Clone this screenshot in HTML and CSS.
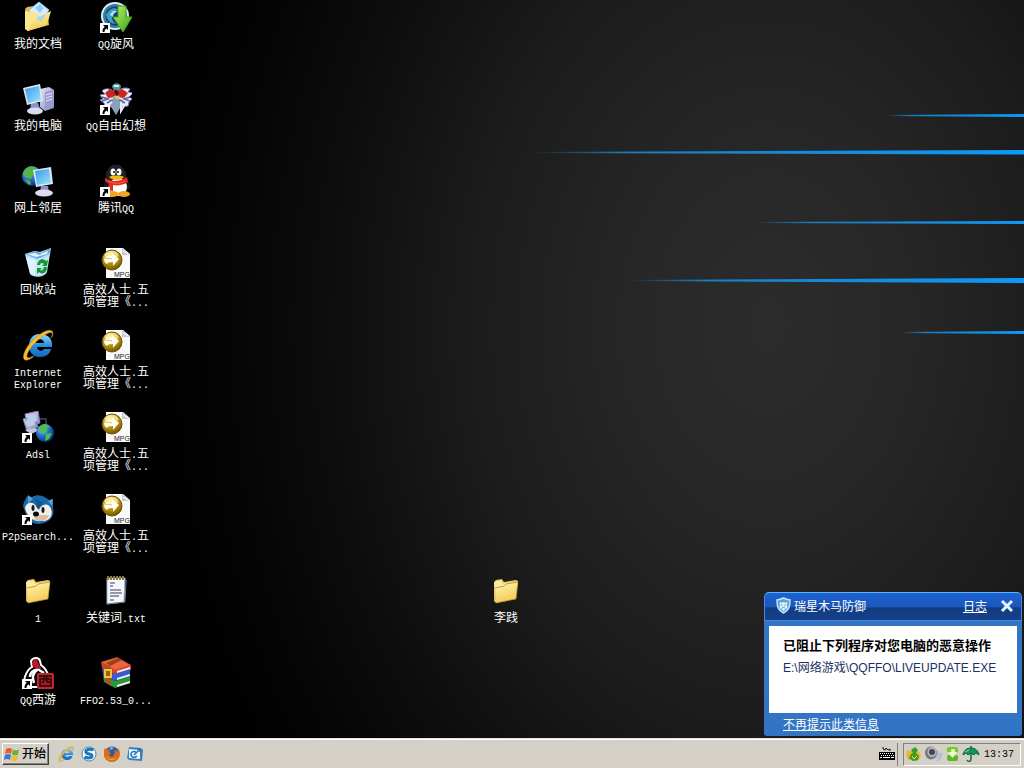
FILE: index.html
```
<!DOCTYPE html>
<html lang="zh-CN">
<head>
  <meta charset="UTF-8">
  <meta name="viewport" content="width=device-width, initial-scale=1.0">
  <title>桌面</title>
  <link rel="stylesheet" href="styles.css">
</head>
<body>
  <!-- Shared icon shapes -->
  <svg class="defs" width="0" height="0" aria-hidden="true">
    <defs>
      <linearGradient id="blade" x1="0" x2="1" y1="0" y2="0">
        <stop offset="0" stop-color="#1496ee" stop-opacity="0"/>
        <stop offset="0.2" stop-color="#168ad8" stop-opacity="0.9"/>
        <stop offset="1" stop-color="#0d99f8"/>
      </linearGradient>
      <linearGradient id="yellow" x1="0" x2="0.4" y1="0" y2="1">
        <stop offset="0" stop-color="#fff6b4"/>
        <stop offset="1" stop-color="#f3cb55"/>
      </linearGradient>
      <linearGradient id="screen" x1="0" x2="1" y1="0" y2="1">
        <stop offset="0" stop-color="#3a98e6"/>
        <stop offset="1" stop-color="#9ae6ff"/>
      </linearGradient>
      <linearGradient id="metal" x1="0" x2="1" y1="0" y2="1">
        <stop offset="0" stop-color="#e6e6fa"/>
        <stop offset="1" stop-color="#8183b8"/>
      </linearGradient>
      <radialGradient id="globe" cx="0.35" cy="0.3" r="0.75">
        <stop offset="0" stop-color="#8fd0ff"/>
        <stop offset="0.5" stop-color="#2470c8"/>
        <stop offset="1" stop-color="#0b2d78"/>
      </radialGradient>
      <radialGradient id="gold" cx="0.4" cy="0.25" r="0.8">
        <stop offset="0" stop-color="#fff3a0"/>
        <stop offset="0.45" stop-color="#c8a416"/>
        <stop offset="1" stop-color="#6b4c00"/>
      </radialGradient>
      <linearGradient id="green" x1="0" x2="1" y1="0" y2="1">
        <stop offset="0" stop-color="#c2f06a"/>
        <stop offset="1" stop-color="#35a312"/>
      </linearGradient>
      <linearGradient id="ieblue" x1="0" x2="0" y1="0" y2="1">
        <stop offset="0" stop-color="#8fdcff"/>
        <stop offset="0.5" stop-color="#2c8ddd"/>
        <stop offset="1" stop-color="#1767bb"/>
      </linearGradient>
      <symbol id="arrow" viewBox="0 0 32 32">
        <path d="M0 22h10v10H0z" fill="#fff"/>
        <path d="M3 24h5v5l-1.500-1.500C5 28.500 4.500 29.500 4.500 31H2.500c0-2.500.8-4 2.200-5.200z" fill="#000"/>
      </symbol>
      <symbol id="folder" viewBox="0 0 32 32">
        <path d="M4 7l2-2 6-1 2 3 12-2 2 1-2 18L6 28 4 26z" fill="#e9c15a"/>
        <path d="M4 8l2-2 5-.6 2 3 13-2 2 0v4L5 14z" fill="#fdeb9e"/>
        <path d="M5 13l9-2 2-2 12-2-2 17-20 4z" fill="url(#yellow)"/>
        <path d="M5 13l9-2 2-2 12-2-2 17-20 4" fill="none" stroke="#a97a26" stroke-width="0.700"/>
      </symbol>
      <symbol id="mpg" viewBox="0 0 32 32">
        <path d="M6 1h17l7 6v24H6z" fill="#fafafa"/>
        <path d="M22 1v7h8z" fill="#c4c9cd"/>
        <path d="M23 4l5 3" stroke="#fff"/>
        <circle cx="12" cy="13" r="10" fill="url(#gold)" stroke="#6b5100"/>
        <ellipse cx="11.500" cy="8" rx="7" ry="4" fill="#fff6bc" opacity="0.6"/>
        <path d="M4 12c2-3 5-4 8-3V6l7 6-6 7v-4c-3 0-5 0-6 2-2-1-3-3-3-5z" fill="#fffdf0"/>
        <path d="M5 12c2-1 5-1 7 0" fill="none" stroke="#d6c266"/>
        <text x="14" y="30" class="badge">MPG</text>
      </symbol>
      <symbol id="ie" viewBox="0 0 32 32">
        <path fill-rule="evenodd" d="M18 5C10 5 7 11 7 17s4 11 11 11c6 0 10-3 11-8h-7c-2 3-7 2-7-2h15C31 10 26 5 18 5zm-4 9c0-5 8-5 8 0z" fill="url(#ieblue)"/>
        <path d="M31 4c-1-6-12-1-20 7S-1 29 3 31c3 1 7-2 9-4-3 1-6 3-7 1-1-3 4-11 11-17S29 2 30 4c1 1-.5 4-1 5 2-2 2-4 2-5z" fill="#f5be35" stroke="#b8831a" stroke-width="0.500"/>
      </symbol>
    </defs>
  </svg>

  <main class="desktop">
    <svg class="streaks" width="500" height="350" viewBox="0 0 500 350" aria-hidden="true">
      <path d="M362 115L500 114v3l-138-1z" fill="url(#blade)"/>
      <path d="M8 152L500 150v4.500L8 153z" fill="url(#blade)"/>
      <path d="M230 222L500 221v3l-270-1z" fill="url(#blade)"/>
      <path d="M106 280L500 278v5l-394-2z" fill="url(#blade)"/>
      <path d="M376 332L500 331v3l-124-1z" fill="url(#blade)"/>
    </svg>

    <nav class="icons" aria-label="桌面图标">
      <a class="shortcut" href="#">
        <svg viewBox="0 0 32 32">
          <path d="M3 8l2-2 7-1 3 3 10-1 2 17L5 30z" fill="#e5b648"/>
          <path d="M7 9L17 1l10 8-9 13-9-3z" fill="#d5eeff" stroke="#84bce4"/>
          <path d="M13 7l5-4 4 4-4 5z" fill="#8dccf6"/>
          <path d="M3 10l13 2 2 5L6 30l-3-2z" fill="#fce58c"/>
          <path d="M6 30l5-12 18-8-4 14z" fill="url(#yellow)"/>
          <path d="M14 17l5 4 5-8z" fill="#a8d6ed"/>
        </svg>
        <span>我的文档</span>
      </a>
      <a class="shortcut" href="#">
        <svg viewBox="0 0 32 32">
          <circle cx="15" cy="15" r="14" fill="#d5edf4"/>
          <circle cx="15" cy="15" r="12" fill="#377a9d"/>
          <circle cx="15" cy="15" r="9.500" fill="#123e68"/>
          <path d="M6 14c3-7 9-9 15-4-5-2-9 1-9 6 0 4 3 6 4 7-6 0-9-4-10-9z" fill="#3f9cc4"/>
          <path d="M10 14c1-3 4-6 8-3-3 0-5 2-5 5z" fill="#a5e2f0"/>
          <path d="M18 5h8v11h6L23 31l-10-15h5z" fill="url(#green)" stroke="#3fa51b"/>
          <use href="#arrow"/>
        </svg>
        <span><b>QQ</b>旋风</span>
      </a>

      <a class="shortcut" href="#">
        <svg viewBox="0 0 32 32">
          <path d="M18 6l9-2 5 3v18l-9 3-5-4z" fill="url(#metal)"/>
          <path d="M23 9l8-2v17l-8 3z" fill="#9a9bce"/>
          <path d="M24 12l6-2M24 15l6-2M24 18l6-2" stroke="#e4e5fa"/>
          <path d="M9 20h7l3 8H8z" fill="#8e92c8"/>
          <ellipse cx="13" cy="28" rx="8" ry="3.500" fill="#dcdcf3"/>
          <path d="M1 5l17-4 3 17-16 4z" fill="#e0e3f5"/>
          <path d="M3 6l14-3 2 14-13 3z" fill="url(#screen)"/>
        </svg>
        <span>我的电脑</span>
      </a>
      <a class="shortcut" href="#">
        <svg viewBox="0 0 32 32">
          <path d="M16 9C9 5 5 5 2 8l3 3-5 1 3 4-3 1 4 3 1 3 7 1 4-5 4 5 8-1 1-4 3-3-3-2 4-4-5-1 2-3c-5-2-9-1-14 3z" fill="#eeeaf8" stroke="#7684ae"/>
          <path d="M5 10l5-4 6 2 6-2 6 4-4 5-8-1-8 1z" fill="#c72625"/>
          <path d="M2 14l6 2-6 2m28-4l-6 2 6 2M7 20l5-3 3 3m10 0l-5-3-3 3" fill="none" stroke="#58609d" stroke-width="1.500"/>
          <path d="M13 13h6v5l4 2-7 12-6-10 3-3z" fill="#8da1b6"/>
          <path d="M21 19v9l3-5" fill="none" stroke="#e5edf3" stroke-width="2"/>
          <path d="M12 4c0-5 9-5 9 0l-2 3h-5z" fill="#5b9298"/>
          <path d="M14 3h5" stroke="#d5f4eb" stroke-width="2"/>
          <path d="M14 9l2-2 3 3-2 3z" fill="#381319"/>
          <path d="M15 13l2 2 2-2" stroke="#eec64d" stroke-width="2" fill="none"/>
          <use href="#arrow"/>
        </svg>
        <span><b>QQ</b>自由幻想</span>
      </a>

      <a class="shortcut" href="#">
        <svg viewBox="0 0 32 32">
          <circle cx="10" cy="11" r="10" fill="url(#globe)"/>
          <path d="M3 5c4-5 9-4 13-1l-4 2 2 3-4 2-1 3-6-2-2-3zM3 14l5 2 1 4-3-1z" fill="#55b543"/>
          <path d="M19 21h7l1 6h-9z" fill="#8990c1"/>
          <ellipse cx="22" cy="28" rx="9" ry="3.500" fill="#dcd9f1"/>
          <path d="M11 5l18-3 2 17-17 3z" fill="#dce7fa"/>
          <path d="M13 6l14-2 2 14-14 2z" fill="url(#screen)"/>
        </svg>
        <span>网上邻居</span>
      </a>
      <a class="shortcut" href="#">
        <svg viewBox="0 0 32 32">
          <path d="M8 14C2 18 4 23 6 24l22 1c4-2 3-6-2-12z" fill="#17181b"/>
          <ellipse cx="16" cy="11" rx="9.500" ry="11" fill="#1d2025" stroke="#3b3f46" stroke-width="0.500"/>
          <ellipse cx="18" cy="22" rx="9" ry="9" fill="#fff"/>
          <ellipse cx="12" cy="29" rx="7" ry="3" fill="#f5a51b"/>
          <ellipse cx="24" cy="29" rx="6" ry="3" fill="#f5a51b"/>
          <ellipse cx="13" cy="7" rx="2.500" ry="3.500" fill="#fff"/>
          <ellipse cx="19" cy="7" rx="2.500" ry="3.500" fill="#fff"/>
          <circle cx="14" cy="7" r="1" fill="#111"/>
          <circle cx="18" cy="7" r="1" fill="#111"/>
          <path d="M9 12c3-2 12-2 15 0-3 4-12 4-15 0z" fill="#f8b21c"/>
          <path d="M5 13c6 4 15 4 22-1l1 5c-4 3-11 4-15 3v6l-6-1 2-6-4-3z" fill="#e32c20"/>
          <path d="M8 16c6 3 12 3 17 0" fill="none" stroke="#ff7963" stroke-width="0.700"/>
          <use href="#arrow"/>
        </svg>
        <span>腾讯<b>QQ</b></span>
      </a>

      <a class="shortcut" href="#">
        <svg viewBox="0 0 32 32">
          <path d="M3 7l10-3 5 1 11-4-4 24c-3 6-14 6-17 2z" fill="#b9e2fa"/>
          <path d="M3 7l9-3 7 2 10-5-2 6-12 5z" fill="#68abda"/>
          <path d="M5 7l8-1 4 2 9-4-1 3-11 3z" fill="#e0f5ff"/>
          <path d="M4 10l10 3-1 16-5-3z" fill="#ddf4ff"/>
          <path d="M14 14l13-5-3 17-10 3z" fill="#c3e7fa"/>
          <path d="M15 18c1-6 6-7 9-4l2-1-1 6h-5l2-2c-2-2-4-1-4 1zM25 20c0 6-5 8-8 5l-2 2v-6h5l-2 2c2 1 3 0 4-3z" fill="#14982b"/>
        </svg>
        <span>回收站</span>
      </a>
      <a class="shortcut" href="#">
        <svg viewBox="0 0 32 32"><use href="#mpg"/></svg>
        <span>高效人士<b>.</b>五项管理《<b>...</b></span>
      </a>

      <a class="shortcut" href="#">
        <svg viewBox="0 0 32 32"><use href="#ie"/></svg>
        <span><b>Internet Explorer</b></span>
      </a>
      <a class="shortcut" href="#">
        <svg viewBox="0 0 32 32"><use href="#mpg"/></svg>
        <span>高效人士<b>.</b>五项管理《<b>...</b></span>
      </a>

      <a class="shortcut" href="#">
        <svg viewBox="0 0 32 32">
          <path d="M3 3l13-3 2 12-13 3zM1 8l12-3 3 11-11 4z" fill="url(#metal)" stroke="#777cac"/>
          <path d="M5 5l9-2 1 7-8 2zM3 10l9-2 1 6-8 2z" fill="#b8cee9"/>
          <path d="M3 19l10-2 5 2-9 4z" fill="#c4c5dd"/>
          <path d="M18 8h6v8" fill="none" stroke="#34344f" stroke-width="2"/>
          <circle cx="23" cy="22" r="9" fill="url(#globe)"/>
          <path d="M17 17c3-5 8-5 11-1l-4 1 1 4-4 2-3-3zM24 23l6-1-3 6-4 2z" fill="#4dbd4f"/>
          <use href="#arrow"/>
        </svg>
        <span><b>Adsl</b></span>
      </a>
      <a class="shortcut" href="#">
        <svg viewBox="0 0 32 32"><use href="#mpg"/></svg>
        <span>高效人士<b>.</b>五项管理《<b>...</b></span>
      </a>

      <a class="shortcut" href="#">
        <svg viewBox="0 0 32 32">
          <path d="M5 3l5 1c7-4 13 0 17 3l4-1v9c2 8-3 13-9 15-9 3-16-1-18-8L1 13c1-5 3-8 4-10z" fill="#1769a9"/>
          <path d="M6 2l5 4-5 4zm20 6l5-2-1 7z" fill="#54a3d4"/>
          <path d="M3 15c1-6 9-8 12 0l2 2c2-6 10-8 12-1 3 7-3 13-10 12-7 1-14-4-16-13z" fill="#f3eee6"/>
          <path d="M12 22l15 0c-1 6-10 8-15 4z" fill="#dfbea4"/>
          <ellipse cx="11" cy="15" rx="1.500" ry="3" fill="#111c28"/>
          <ellipse cx="21" cy="17" rx="1.500" ry="3" fill="#111c28"/>
          <ellipse cx="14" cy="21" rx="3" ry="2.500" fill="#080a0c"/>
          <path d="M13 6l3 10 5-7" fill="#135490"/>
          <use href="#arrow"/>
        </svg>
        <span><b>P2pSearch...</b></span>
      </a>
      <a class="shortcut" href="#">
        <svg viewBox="0 0 32 32"><use href="#mpg"/></svg>
        <span>高效人士<b>.</b>五项管理《<b>...</b></span>
      </a>

      <a class="shortcut" href="#">
        <svg viewBox="0 0 32 32"><use href="#folder"/></svg>
        <span><b>1</b></span>
      </a>
      <a class="shortcut" href="#">
        <svg viewBox="0 0 32 32">
          <path d="M7 3h18l-1 24-17 2z" fill="#f3f7fc" stroke="#9cadc5"/>
          <path d="M25 4l1 1-1 22-18 2" fill="none" stroke="#6d7f97"/>
          <path d="M8 1v4m3-4v4m3-4v4m3-4v4m3-4v4m3-4v4" stroke="#8d7a3c" stroke-width="2"/>
          <path d="M10 8h5m-5 3h3m-3 4h11m-11 3h12m-12 3h9m-9 4h4" stroke="#3b3e47"/>
        </svg>
        <span>关键词<b>.txt</b></span>
      </a>

      <a class="shortcut" href="#">
        <svg viewBox="0 0 32 32">
          <path d="M9 4c2-4 8-4 9 0l1 4c4 3 6 6 7 10l-1 12H4C0 26 3 14 10 10z" fill="#090909" stroke="#fff" stroke-width="2"/>
          <path d="M11 4c3-4 5 0 5 2l3 5-5 1-4-4z" fill="#c51723"/>
          <path d="M8 20c0-4 3-7 7-7-4 3-5 8-3 13M17 13l5 3" fill="none" stroke="#fff" stroke-width="2.500"/>
          <rect x="15" y="16" width="17" height="16" rx="2" fill="#a41821"/>
          <path d="M17 19h13M18 22h11v7H18zM22 19v5l-2 2m5-7v6h3" fill="none" stroke="#2d0508" stroke-width="1.500"/>
          <path d="M16 17h15v14H16z" fill="none" stroke="#df4950" stroke-width="0.700"/>
          <use href="#arrow"/>
        </svg>
        <span><b>QQ</b>西游</span>
      </a>
      <a class="shortcut" href="#">
        <svg viewBox="0 0 32 32">
          <path d="M1 5L17 0l14 8v5l-16 5L2 11z" fill="#d64128"/>
          <path d="M2 5l15-4 13 7-15 5z" fill="#e9673f"/>
          <path d="M2 11l13 6 15-5v7l-15 5-12-6z" fill="#3a5bd0"/>
          <path d="M3 18l12 6 15-5v7l-15 5-11-6z" fill="#299639"/>
          <path d="M17 14l13-4v2l-13 4zm0 7l13-4v2l-13 4zm0 7l13-4v2l-13 4z" fill="#e9f1fb"/>
          <path d="M5 7l6 3v19l-5-3V18z" fill="#a8561d"/>
          <path d="M6 6l12-5 4 2-12 6z" fill="#9d421f"/>
          <path d="M5 13h6v7H5z" fill="none" stroke="#f4c32e" stroke-width="2"/>
        </svg>
        <span><b>FFO2.53_0...</b></span>
      </a>
    </nav>

    <a class="shortcut loose" href="#">
      <svg viewBox="0 0 32 32"><use href="#folder"/></svg>
      <span>李践</span>
    </a>

    <section class="popup" aria-label="瑞星木马防御">
      <header class="popup-head">
        <svg class="shield" viewBox="0 0 16 18">
          <path d="M1 3c3 0 5-1 7-2 2 1 4 2 7 2 0 7-1 11-7 14C2 14 1 10 1 3z" fill="#5d9fd8" stroke="#c4e4f8" stroke-width="1.500"/>
          <path d="M4 5l2 1c1-1 3-1 4 0l2-1v4l0 3-2 1-2 2-2-2-2-1V9z" fill="#d9f3ff"/>
          <path d="M5 8l2 1M11 8L9 9M6 12l2-1 2 1" fill="none" stroke="#4c8cc4"/>
        </svg>
        <h1>瑞星木马防御</h1>
        <a href="#">日志</a>
        <button class="close" type="button" aria-label="关闭">
          <svg viewBox="0 0 14 14"><path d="M2 2l10 10M12 2L2 12" stroke="#e4f4ff" stroke-width="3"/></svg>
        </button>
      </header>
      <div class="popup-body">
        <h2>已阻止下列程序对您电脑的恶意操作</h2>
        <p>E:\网络游戏\QQFFO\LIVEUPDATE.EXE</p>
      </div>
      <footer class="popup-foot"><a href="#">不再提示此类信息</a></footer>
    </section>
  </main>

  <footer class="taskbar">
    <button class="start" type="button">
      <svg viewBox="0 0 16 16">
        <path d="M2 3c2-1.500 4-1.500 6 0L7 8C5 6.500 3 6.500 1 8z" fill="#e95b2b"/>
        <path d="M9 3.500c2 1.300 4 1.300 6 0L14 8.500c-2 1.300-4 1.300-6 0z" fill="#65b32e"/>
        <path d="M1 9c2-1.500 4-1.500 6 0l-1 5c-2-1.500-4-1.500-6 0z" fill="#3c77d4"/>
        <path d="M8 9.500c2 1.300 4 1.300 6 0l-1 5c-2 1.300-4 1.300-6 0z" fill="#f3bd24"/>
      </svg>
      开始
    </button>

    <nav class="quick" aria-label="快速启动">
      <a href="#" aria-label="Internet Explorer"><svg viewBox="0 0 32 32"><use href="#ie"/></svg></a>
      <a href="#" aria-label="搜狗">
        <svg viewBox="0 0 16 16">
          <circle cx="8" cy="8" r="7" fill="#fff" stroke="#3a86bd"/>
          <path d="M12.500 4C8 2 4 4 5 6.500c1 2 6 1 6 3.500 0 2-4 2.500-7.500 1" fill="none" stroke="#1d76b8" stroke-width="3"/>
        </svg>
      </a>
      <a href="#" aria-label="Firefox">
        <svg viewBox="0 0 16 16">
          <circle cx="8" cy="8" r="7.500" fill="#2b5c9e"/>
          <path d="M5 2c2-1.500 4-1 5 0l-3 2z" fill="#74b0dc"/>
          <path d="M1 2l2 2 3-.5L5 6l2 1-2 2c1 2 4 2 5 0l1-3-1-2c3 0 3 2 3 3l1-5c4 6 1 13-5 14C2 17-3 9 1 2z" fill="#dd6b18"/>
          <path d="M2 7c0 6 7 8 11 4-2 4-11 5-11-4z" fill="#f8b733"/>
        </svg>
      </a>
      <a href="#" aria-label="显示桌面">
        <svg viewBox="0 0 16 16">
          <path d="M2 1l12 1 2 2-1 11-13-1-2-2z" fill="#3a80c0"/>
          <path d="M2 3l11 1v9L2 12z" fill="#e8f5ff"/>
          <path d="M9 6c-3-1-5 0-5 2 0 4 4 4 6 2M7 9l6-6m-3 0h3v3" fill="none" stroke="#2878b4" stroke-width="1.500"/>
        </svg>
      </a>
    </nav>

    <svg class="keyboard" viewBox="0 0 18 16" aria-label="键盘">
      <path d="M5 1v2l2 1 1-2 2 2 2-1v2" fill="none" stroke="#111"/>
      <path d="M1 6h16v8H1z" fill="#000"/>
      <path d="M2 7.500h14M3 9.500h13" stroke="#fff" stroke-dasharray="1 1"/>
      <path d="M2 11.500h2m1 0h7m1 0h3" stroke="#fff"/>
    </svg>

    <div class="tray">
      <svg viewBox="0 0 16 16">
        <path d="M2 4l5 2 2-3 5 4c2 4-1 8-5 8l-6-1C-1 11 0 6 2 4z" fill="#ecb62f"/>
        <path d="M5 4l4-3 3 3-2 3 3 3-1 4-5 1-4-3 2-4 2-1z" fill="#409a24"/>
        <path d="M6 10l2 3 3-3" fill="none" stroke="#e3ed6a"/>
      </svg>
      <svg viewBox="0 0 18 16">
        <ellipse cx="7" cy="7" rx="6" ry="6.500" fill="#747980"/>
        <ellipse cx="8" cy="6" rx="4.500" ry="5" fill="#b4b9c0"/>
        <circle cx="8" cy="6" r="3" fill="#42464e"/>
        <path d="M11 12c3-1 4-4 3-7m-1 10c3-2 4-5 4-8" fill="none" stroke="#aaaee0" stroke-width="1.500"/>
      </svg>
      <svg viewBox="0 0 16 16">
        <rect x="3" y="1" width="11" height="6" rx="2" fill="#77c826"/>
        <rect x="3" y="9" width="11" height="6" rx="2" fill="#61b61d"/>
        <path d="M7 3h4v3h3l-5.500 6L3 6h4z" fill="#f0fbd6" stroke="#8ccc50" stroke-width="0.500"/>
      </svg>
      <svg viewBox="0 0 18 16">
        <path d="M9 0v4m0 2v7c0 3-3 3-4 1" fill="none" stroke="#17683d" stroke-width="1.500"/>
        <path d="M1 9C2 4 5 2 9 2s7 2 8 7l-3-2-2 2-3-2-3 2-2-2z" fill="#16935a" stroke="#076837"/>
        <path d="M3 6l4-2" stroke="#78d6a5"/>
      </svg>
      <time>13:37</time>
    </div>
  </footer>
</body>
</html>
```
FILE: styles.css
```
* {
  box-sizing: border-box;
}

body {
  margin: 0;
  min-height: 100vh;
  display: flex;
  flex-direction: column;
  background: #000;
  font-family: "Liberation Sans", "Noto Sans CJK SC", sans-serif;
  font-size: 12px;
  overflow: hidden;
}

a {
  color: inherit;
}

svg {
  display: block;
}

.defs {
  position: absolute;
}

/* Wallpaper */
.desktop {
  position: relative;
  flex: 1;
  background: radial-gradient(ellipse 60% 112% at 75% 44%, #2c2c2c 0, #272727 22%, #1c1c1c 48%, #0d0d0d 72%, #040404 89%, #000 100%);
}

.streaks {
  position: absolute;
  top: 0;
  right: 0;
}

/* Desktop icons */
.icons {
  position: relative;
  display: grid;
  grid-template-columns: 76px 76px;
  grid-auto-rows: 82px;
  column-gap: 2px;
  width: max-content;
}

.shortcut {
  display: flex;
  flex-direction: column;
  align-items: center;
  gap: 5px;
  padding-top: 1px;
  color: #fff;
  line-height: 12px;
  text-align: center;
  text-decoration: none;
}

.shortcut svg {
  width: 32px;
  height: 32px;
}

.shortcut span {
  max-width: 72px;
}

/* half-width characters, six pixels each */
.shortcut b,
.tray time {
  font-family: "Liberation Mono", monospace;
  font-size: 10px;
  font-weight: normal;
}

.shortcut b {
  line-height: 0;
}

.badge {
  font-family: "Liberation Sans", sans-serif;
  font-size: 7px;
  fill: #222;
}

.loose {
  position: absolute;
  left: 468px;
  top: 574px;
  width: 76px;
}

/* Notification */
.popup {
  position: absolute;
  right: 2px;
  bottom: 2px;
  width: 258px;
  background: #3275c5;
  border-radius: 5px 5px 3px 3px;
  color: #fff;
  overflow: hidden;
}

.popup-head {
  display: flex;
  align-items: center;
  height: 29px;
  padding: 0 7px 2px 11px;
  background: linear-gradient(#1d62d2, #1b56bb 50%, #123c82 56%, #153f88);
  border: 1px solid #438ae8;
  border-top-color: #56b4ff;
  border-bottom-color: #4488df;
  border-radius: 5px 5px 0 0;
}

.popup-head h1 {
  flex: 1;
  margin: 0 0 0 3px;
  font-size: 12px;
  font-weight: normal;
}

.shield {
  width: 15px;
  height: 17px;
}

.close {
  margin-left: 13px;
  padding: 0;
  border: 0;
  background: none;
}

.close svg {
  width: 14px;
  height: 14px;
}

.popup-body {
  height: 87px;
  margin: 5px 5px 0;
  padding: 11px 14px;
  background: #fff;
  color: #1d2f62;
}

.popup-body h2 {
  margin: 0;
  color: #000;
  font-size: 13px;
  line-height: 18px;
  white-space: nowrap;
}

.popup-body p {
  margin: 4px 0 0;
  line-height: 18px;
  white-space: nowrap;
}

.popup-foot {
  padding: 3px 19px 2px;
  line-height: 18px;
}

/* Taskbar */
.taskbar {
  display: flex;
  align-items: center;
  height: 30px;
  padding: 1px 3px 0 2px;
  background: #d4d0c8;
  border-top: 1px solid #e8e5dd;
  box-shadow: inset 0 1px #fff;
}

.start {
  display: flex;
  align-items: center;
  gap: 2px;
  height: 22px;
  padding: 0 2px 0 1px;
  background: #d4d0c8;
  border: 1px solid;
  border-color: #fff #404040 #404040 #fff;
  box-shadow: inset -1px -1px #808080;
  color: #000;
  font-family: "Liberation Sans", "Noto Sans CJK SC", sans-serif;
  font-size: 12px;
  font-weight: 500;
  line-height: 18px;
}

.start svg,
.quick svg {
  width: 16px;
  height: 16px;
}

.quick {
  display: flex;
  flex: 1;
  gap: 7px;
  margin-left: 9px;
}

.keyboard {
  width: 18px;
  height: 16px;
}

.tray {
  display: flex;
  align-items: center;
  gap: 2px;
  height: 23px;
  margin-left: 7px;
  padding: 0 6px 0 2px;
  border: 1px solid;
  border-color: #808080 #fff #fff #808080;
  box-shadow: -5px 0 #d4d0c8, -6px 0 #808080;
}

.tray svg {
  height: 16px;
}

.tray time {
  margin-left: 2px;
}
```
